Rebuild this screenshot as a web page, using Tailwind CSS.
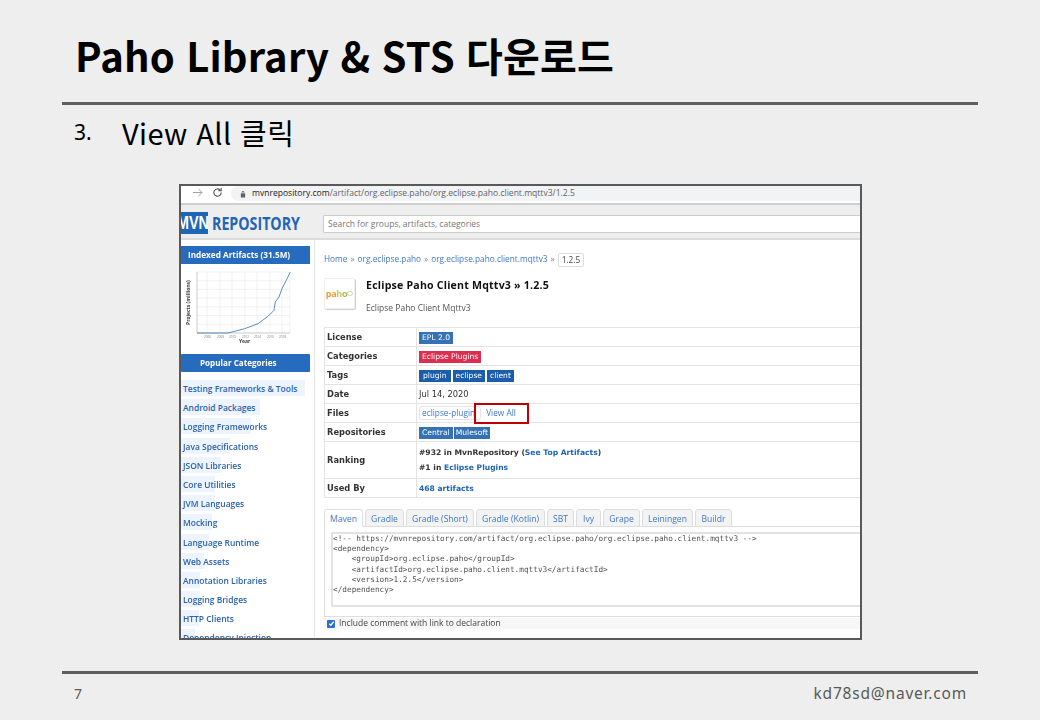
<!DOCTYPE html>
<html lang="ko">
<head>
  <meta charset="UTF-8" />
  <title>Paho Library &amp; STS 다운로드</title>
  <script src="https://cdn.jsdelivr.net/npm/@tailwindcss/browser@4"></script>
</head>
<body class="w-[1040px] h-[720px] overflow-hidden bg-[#eeeeee] font-['Noto_Sans','Noto_Sans_CJK_KR',sans-serif] text-black">
  <div class="flex flex-col h-[720px]">
    <!-- Slide title -->
    <div class="h-[102px] px-[75px] pt-[25px]">
      <h1 class="text-[40px] leading-[60px] font-bold tracking-[0.15px] font-['Noto_Sans_CJK_KR',sans-serif]">Paho Library &amp; STS 다운로드</h1>
    </div>
    <div class="mx-[62px] h-[3px] bg-[#5f5f5f]"></div>

    <div class="flex items-center h-[56px] pl-[74px] pb-[1px]">
      <span class="w-[48px] text-[21px]">3.</span>
      <span class="text-[29px] tracking-[0.4px] font-['Noto_Sans_CJK_KR',sans-serif]">View All 클릭</span>
    </div>

    <!-- Screenshot of the site -->
    <div class="relative ml-[179px] mt-[23px] w-[683px] h-[456px] border-2 border-[#595959] bg-white overflow-hidden font-['Open_Sans',sans-serif]">
      <div class="blur-[0.35px] h-full">
        <!-- Browser bar -->
        <div class="flex items-start h-[19px] bg-white border-b-2 border-[#cfcfcf]">
          <svg class="ml-[11px] mt-[1px] w-[11px] h-[11px]" viewBox="0 0 12 12" fill="none" stroke="#9a9a9a" stroke-width="1"><path d="M1 6h10M7 2l4 4-4 4" /></svg>
          <svg class="ml-[9px] mt-[1px] w-[11px] h-[11px]" viewBox="0 0 12 12" fill="none" stroke="#555" stroke-width="1.2"><path d="M10 6a4 4 0 1 1-1.2-2.8M10 1v3H7" /></svg>
          <div class="flex items-center ml-[8px] flex-1 h-[15px] rounded-l-full bg-[#f1f3f4] pl-[9px] text-[8.55px] text-[#5f6368] whitespace-nowrap">
            <svg class="w-[6px] h-[8px] mr-[6px]" viewBox="0 0 7 8" fill="#5f6368"><path d="M1 3.5h5V8H1zM2 3.5V2a1.500 1.500 0 0 1 3 0v1.500H4.200V2a.7.7 0 0 0-1.400 0v1.500z" /></svg>
            <span><span class="text-[#222]">mvnrepository.com</span>/artifact/org.eclipse.paho/org.eclipse.paho.client.mqttv3/1.2.5</span>
          </div>
        </div>

        <!-- Site header -->
        <div class="flex items-start h-[35px] bg-[#eeeeee] border-b-2 border-[#dcdcdc]">
          <div class="flex items-center w-[142px] mt-[7px] overflow-hidden">
            <span class="block w-[30px] h-[22px] overflow-hidden bg-[#1f66b5]">
              <span class="block w-[40px] -ml-[4px] scale-x-[0.8] origin-left text-white font-bold text-[18px] leading-[22px] font-['Liberation_Sans',sans-serif]">MVN</span>
            </span>
            <span class="ml-[4px] text-[#1f66b5] font-bold text-[18px] leading-[22px] scale-x-[0.79] origin-left whitespace-nowrap">REPOSITORY</span>
          </div>
          <div class="flex-1 h-[18px] mt-[10px] rounded-l-[2px] border border-[#cccccc] border-r-0 bg-white pl-[4px] text-[8.5px] leading-[16px] text-[#777]">Search for groups, artifacts, categories</div>
        </div>

        <div class="flex h-[403px] overflow-hidden">
          <!-- Sidebar -->
          <div class="w-[134px] shrink-0 border-r border-[#e6e6e6] pt-[6px]">
            <div class="w-[129px] h-[18px] bg-[#266bbd] text-white text-[8.2px] font-bold leading-[18px] pl-[7px]">Indexed Artifacts (31.5M)</div>
            <svg class="block w-[129px] h-[81px] mt-[3px]" viewBox="0 0 129 81" fill="none">
              <path d="M26 5v61M39 5v61M51 5v61M64 5v61M76 5v61M89 5v61M101 5v61M109 5v61M16 5h93M16 13.700h93M16 22.400h93M16 31h93M16 39.800h93M16 48.500h93M16 57.200h93" stroke="#ececec" stroke-width=".7" />
              <path d="M16 5v61h93" stroke="#aaa" stroke-width=".6" />
              <path d="M16 66h31L63.700 61.700 77 56.700 87 49.300 93 43.300 94.300 35 98 30 101 21.700 105.300 13.300 109.300 5" stroke="#4d7fb8" stroke-width=".9" />
              <text x="9" y="58" transform="rotate(-90 9 58)" font-size="5" font-weight="700" fill="#444">Projects (millions)</text>
              <text x="58" y="76" font-size="5" font-weight="700" fill="#444">Year</text>
              <text x="23" y="71" font-size="3" fill="#777">2006</text>
              <text x="36" y="71" font-size="3" fill="#777">2008</text>
              <text x="48" y="71" font-size="3" fill="#777">2010</text>
              <text x="61" y="71" font-size="3" fill="#777">2012</text>
              <text x="73" y="71" font-size="3" fill="#777">2014</text>
              <text x="86" y="71" font-size="3" fill="#777">2016</text>
              <text x="98" y="71" font-size="3" fill="#777">2018</text>
            </svg>
            <div class="w-[129px] h-[18px] mt-[6px] bg-[#266bbd] text-white text-[8.1px] font-bold leading-[18px] pl-[19px] rounded-[1px]">Popular Categories</div>
            <ul class="mt-[8px] text-[8.45px] font-semibold text-[#2a62ad] whitespace-nowrap">
              <li class="relative h-[19.2px] leading-[18px] pl-[2px]"><span class="absolute left-0 top-0 h-[16px] w-[124px] bg-[#edf4fd]"></span><span class="relative">Testing Frameworks &amp; Tools</span></li>
              <li class="relative h-[19.2px] leading-[18px] pl-[2px]"><span class="absolute left-0 top-0 h-[16px] w-[79px] bg-[#edf4fd]"></span><span class="relative">Android Packages</span></li>
              <li class="relative h-[19.2px] leading-[18px] pl-[2px]"><span class="absolute left-0 top-0 h-[16px] w-[70px] bg-[#edf4fd]"></span><span class="relative">Logging Frameworks</span></li>
              <li class="relative h-[19.2px] leading-[18px] pl-[2px]"><span class="absolute left-0 top-0 h-[16px] w-[49px] bg-[#edf4fd]"></span><span class="relative">Java Specifications</span></li>
              <li class="relative h-[19.2px] leading-[18px] pl-[2px]"><span class="absolute left-0 top-0 h-[16px] w-[40px] bg-[#edf4fd]"></span><span class="relative">JSON Libraries</span></li>
              <li class="relative h-[19.2px] leading-[18px] pl-[2px]"><span class="absolute left-0 top-0 h-[16px] w-[34px] bg-[#edf4fd]"></span><span class="relative">Core Utilities</span></li>
              <li class="relative h-[19.2px] leading-[18px] pl-[2px]"><span class="absolute left-0 top-0 h-[16px] w-[34px] bg-[#edf4fd]"></span><span class="relative">JVM Languages</span></li>
              <li class="relative h-[19.2px] leading-[18px] pl-[2px]"><span class="absolute left-0 top-0 h-[16px] w-[31px] bg-[#edf4fd]"></span><span class="relative">Mocking</span></li>
              <li class="relative h-[19.2px] leading-[18px] pl-[2px]"><span class="absolute left-0 top-0 h-[16px] w-[28px] bg-[#edf4fd]"></span><span class="relative">Language Runtime</span></li>
              <li class="relative h-[19.2px] leading-[18px] pl-[2px]"><span class="absolute left-0 top-0 h-[16px] w-[23px] bg-[#edf4fd]"></span><span class="relative">Web Assets</span></li>
              <li class="relative h-[19.2px] leading-[18px] pl-[2px]"><span class="absolute left-0 top-0 h-[16px] w-[19px] bg-[#edf4fd]"></span><span class="relative">Annotation Libraries</span></li>
              <li class="relative h-[19.2px] leading-[18px] pl-[2px]"><span class="absolute left-0 top-0 h-[16px] w-[19px] bg-[#edf4fd]"></span><span class="relative">Logging Bridges</span></li>
              <li class="relative h-[19.2px] leading-[18px] pl-[2px]"><span class="absolute left-0 top-0 h-[16px] w-[18px] bg-[#edf4fd]"></span><span class="relative">HTTP Clients</span></li>
              <li class="relative h-[19.2px] leading-[18px] pl-[2px]"><span class="absolute left-0 top-0 h-[16px] w-[14px] bg-[#edf4fd]"></span><span class="relative">Dependency Injection</span></li>
            </ul>
          </div>

          <!-- Main column -->
          <div class="flex-1 min-w-0 pl-[9px] pt-[12px] whitespace-nowrap">
            <div class="flex items-center h-[15px] text-[8.3px] text-[#888]">
              <span class="text-[#3f78c2]">Home</span><span class="mx-[3px]">»</span>
              <span class="text-[#3f78c2]">org.eclipse.paho</span><span class="mx-[3px]">»</span>
              <span class="text-[#3f78c2]">org.eclipse.paho.client.mqttv3</span><span class="mx-[3px]">»</span>
              <span class="border border-[#dddddd] rounded-[2px] px-[3px] text-[#444] leading-[12px]">1.2.5</span>
            </div>

            <div class="flex mt-[9px] h-[41px]">
              <div class="flex items-center justify-center w-[31px] h-[31px] mt-[2px] rounded-[2px] border border-[#eeeeee] shadow-[1px_1px_1px_#cccccc] text-[9px] font-bold tracking-[-0.3px]">
                <span class="text-[#ef9a3c]">pa</span><span class="text-[#e3c04a]">h</span><span class="text-[#9cbf5a]">o</span><span class="inline-block w-[6px] h-[5px] rounded-full border border-[#d8cfa5]"></span>
              </div>
              <div class="ml-[11px]">
                <div class="text-[10.6px] leading-[14px] mt-[2px] font-bold text-[#111] tracking-[0.2px]">Eclipse Paho Client Mqttv3 » 1.2.5</div>
                <div class="text-[8.5px] leading-[12px] mt-[10px] text-[#555]">Eclipse Paho Client Mqttv3</div>
              </div>
            </div>

            <!-- Artifact info table -->
            <div class="mt-[10px] border-t border-l border-[#e4e4e4] text-[8.3px] font-['DejaVu_Sans',sans-serif] text-[#333]">
              <div class="flex h-[19px] items-center border-b border-[#e4e4e4]"><div class="w-[92px] h-full leading-[19px] pl-[2px] font-bold border-r border-[#e4e4e4]">License</div><div class="pl-[2px] pt-[1px] flex text-[7.6px]"><span class="bg-[#3572b5] text-white px-[3px] leading-[12px]">EPL 2.0</span></div></div>
              <div class="flex h-[19px] items-center border-b border-[#e4e4e4]"><div class="w-[92px] h-full leading-[19px] pl-[2px] font-bold border-r border-[#e4e4e4]">Categories</div><div class="pl-[2px] pt-[1px] flex text-[7.6px]"><span class="bg-[#dc2f50] text-white px-[3px] leading-[12px]">Eclipse Plugins</span></div></div>
              <div class="flex h-[19px] items-center border-b border-[#e4e4e4]"><div class="w-[92px] h-full leading-[19px] pl-[2px] font-bold border-r border-[#e4e4e4]">Tags</div><div class="pl-[2px] pt-[1px] flex gap-[2px] text-[7.6px]"><span class="bg-[#1a5dab] text-white px-[4px] leading-[12px]">plugin</span><span class="bg-[#1a5dab] text-white px-[3px] leading-[12px]">eclipse</span><span class="bg-[#1a5dab] text-white px-[3px] leading-[12px]">client</span></div></div>
              <div class="flex h-[19px] items-center border-b border-[#e4e4e4]"><div class="w-[92px] h-full leading-[19px] pl-[2px] font-bold border-r border-[#e4e4e4]">Date</div><div class="pl-[2px] pt-[1px]">Jul 14, 2020</div></div>
              <div class="flex h-[19px] items-center border-b border-[#e4e4e4]"><div class="w-[92px] h-full leading-[19px] pl-[2px] font-bold border-r border-[#e4e4e4]">Files</div><div class="pl-[2px] flex items-center font-['Open_Sans',sans-serif] text-[8.3px] text-[#3f78c2]"><span class="border border-[#e4e4e4] rounded-[3px] pl-[2px] pr-[5px] leading-[12px]">eclipse-plugin</span><span class="ml-[5px]">View All</span></div></div>
              <div class="flex h-[19px] items-center border-b border-[#e4e4e4]"><div class="w-[92px] h-full leading-[19px] pl-[2px] font-bold border-r border-[#e4e4e4]">Repositories</div><div class="pl-[2px] pt-[1px] flex gap-[1px] text-[7.6px]"><span class="bg-[#3572b5] text-white px-[3px] leading-[12px]">Central</span><span class="bg-[#3572b5] text-white px-[2px] leading-[12px]">Mulesoft</span></div></div>
              <div class="flex h-[37px] items-center border-b border-[#e4e4e4]"><div class="w-[92px] h-full leading-[37px] pl-[2px] font-bold border-r border-[#e4e4e4]">Ranking</div><div class="pl-[2px] text-[7.6px] font-bold leading-[15px]"><div>#932 in MvnRepository (<span class="text-[#1f64b0]">See Top Artifacts</span>)</div><div>#1 in <span class="text-[#1f64b0]">Eclipse Plugins</span></div></div></div>
              <div class="flex h-[19px] items-center border-b border-[#e4e4e4]"><div class="w-[92px] h-full leading-[19px] pl-[2px] font-bold border-r border-[#e4e4e4]">Used By</div><div class="pl-[2px] pt-[1px] text-[7.6px] font-bold text-[#1f64b0]">468 artifacts</div></div>
            </div>

            <!-- Dependency tabs -->
            <div class="flex items-end h-[18px] mt-[11px] gap-[2px] text-[8.6px] text-[#3f78c2]">
              <div class="w-[39px] h-[18px] border border-[#dddddd] border-b-white rounded-t-[3px] bg-white text-center leading-[18px] relative z-10">Maven</div>
              <div class="w-[39px] h-[18px] border border-[#dddddd] rounded-t-[3px] bg-[#f3f3f3] text-center leading-[18px]">Gradle</div>
              <div class="w-[68px] h-[18px] border border-[#dddddd] rounded-t-[3px] bg-[#f3f3f3] text-center leading-[18px]">Gradle (Short)</div>
              <div class="w-[69px] h-[18px] border border-[#dddddd] rounded-t-[3px] bg-[#f3f3f3] text-center leading-[18px]">Gradle (Kotlin)</div>
              <div class="w-[27px] h-[18px] border border-[#dddddd] rounded-t-[3px] bg-[#f3f3f3] text-center leading-[18px]">SBT</div>
              <div class="w-[25px] h-[18px] border border-[#dddddd] rounded-t-[3px] bg-[#f3f3f3] text-center leading-[18px]">Ivy</div>
              <div class="w-[37px] h-[18px] border border-[#dddddd] rounded-t-[3px] bg-[#f3f3f3] text-center leading-[18px]">Grape</div>
              <div class="w-[51px] h-[18px] border border-[#dddddd] rounded-t-[3px] bg-[#f3f3f3] text-center leading-[18px]">Leiningen</div>
              <div class="w-[37px] h-[18px] border border-[#dddddd] rounded-t-[3px] bg-[#f3f3f3] text-center leading-[18px]">Buildr</div>
            </div>
            <div class="-mt-[1px] h-[91px] border border-[#dddddd] border-r-0 pl-[6px] pt-[5px]">
              <pre class="h-[75px] border-2 border-[#e2e2e2] border-r-0 rounded-l-[2px] bg-white font-['DejaVu_Sans_Mono',monospace] text-[7.74px] leading-[10.2px] text-[#555]">&lt;!-- https://mvnrepository.com/artifact/org.eclipse.paho/org.eclipse.paho.client.mqttv3 --&gt;
&lt;dependency&gt;
    &lt;groupId&gt;org.eclipse.paho&lt;/groupId&gt;
    &lt;artifactId&gt;org.eclipse.paho.client.mqttv3&lt;/artifactId&gt;
    &lt;version&gt;1.2.5&lt;/version&gt;
&lt;/dependency&gt;</pre>
            </div>
            <div class="flex items-center h-[11px] mt-[1px] bg-[#f7f7f7] pl-[3px] text-[8.5px] text-[#444]">
              <span class="flex items-center justify-center w-[8px] h-[8px] rounded-[1px] bg-[#2b6fd0] mr-[4px]"><svg class="w-[7px] h-[7px]" viewBox="0 0 8 8" fill="none" stroke="white" stroke-width="1.500"><path d="M1.500 4.200l1.800 1.800 3.200-4" /></svg></span>
              Include comment with link to declaration
            </div>
          </div>
        </div>
      </div>
      <!-- Red highlight around View All -->
      <div class="absolute left-[293px] top-[217px] w-[55px] h-[21px] border-2 border-[#c00000]"></div>
    </div>

    <!-- Footer -->
    <div class="mx-[62px] mt-[31px] h-[3px] bg-[#5f5f5f]"></div>
    <div class="flex justify-between items-center h-[39px] pl-[74px] pr-[73px] text-[#595959]">
      <span class="text-[14px]">7</span>
      <span class="text-[15.5px] tracking-[0.8px]">kd78sd@naver.com</span>
    </div>
  </div>
</body>
</html>
